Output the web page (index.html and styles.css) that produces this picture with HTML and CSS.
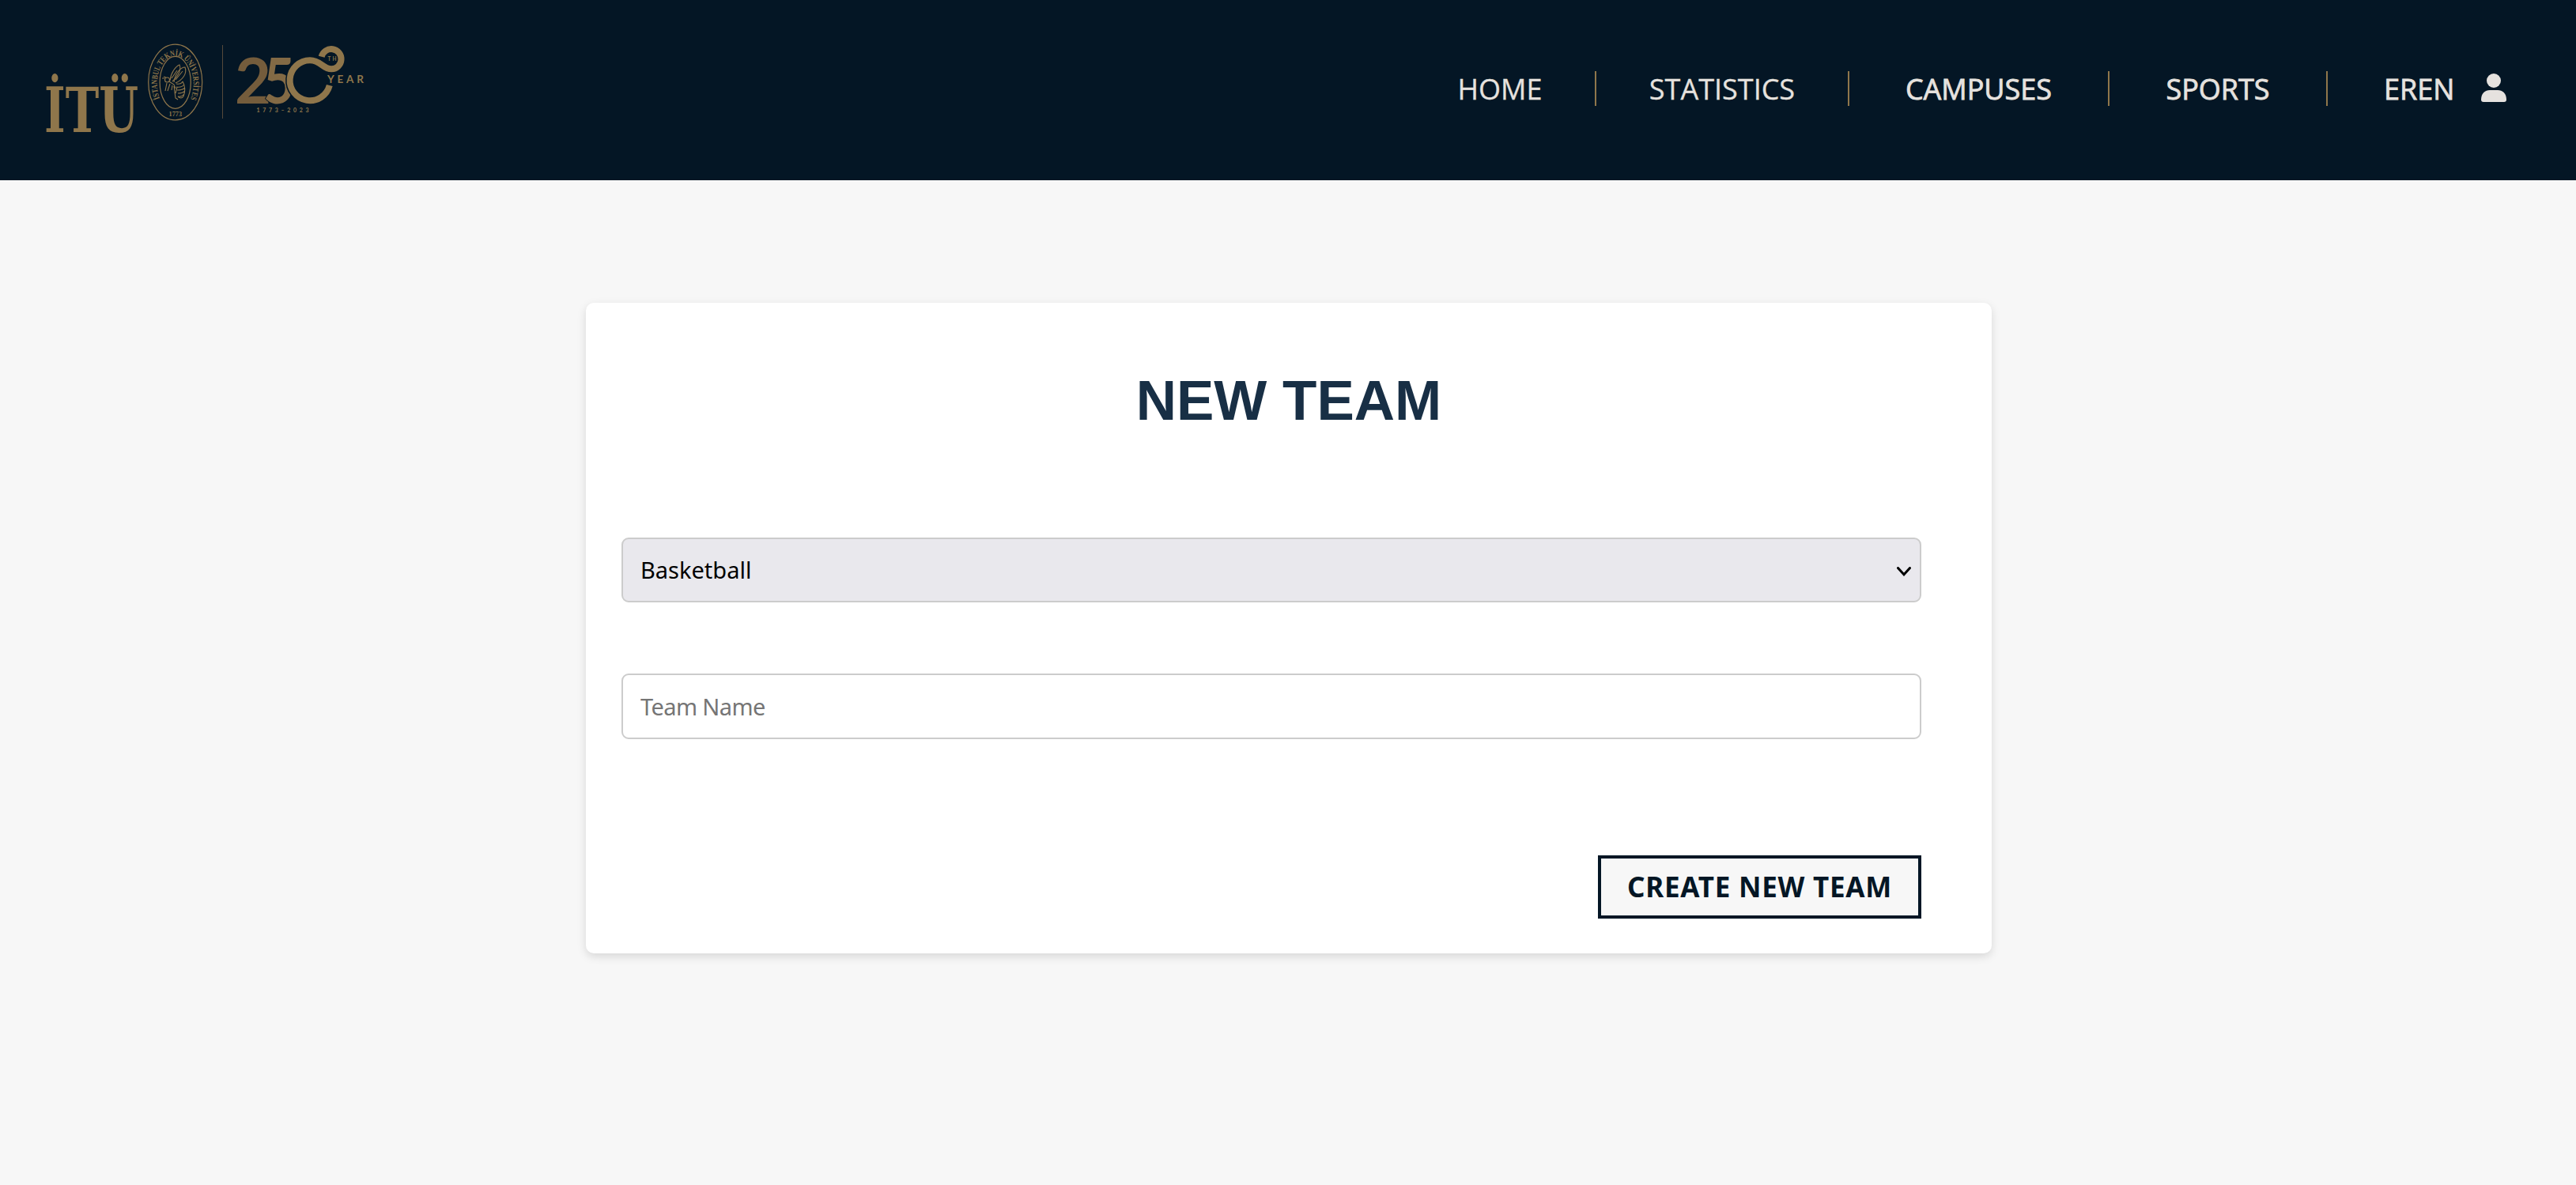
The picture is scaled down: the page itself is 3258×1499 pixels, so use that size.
FILE: index.html
```html
<!DOCTYPE html>
<html lang="en">
<head>
<meta charset="utf-8">
<title>New Team</title>
<link rel="stylesheet" href="styles.css">
</head>
<body>
<header class="header">
  <a class="brand" href="#" aria-label="İTÜ">
    <svg class="logo" viewBox="50 40 430 155" role="img">
      <text class="wordmark" x="56" y="167" textLength="119" lengthAdjust="spacingAndGlyphs">İTÜ</text>
      <g class="line">
        <ellipse cx="221.7" cy="104" rx="34" ry="47.8"/>
        <ellipse cx="221.7" cy="104.3" rx="19.6" ry="33"/>
        <g class="bee">
          <path d="M215 102C216 92 222 84 227 82C230 89 224 98 218 103"/>
          <path d="M220 104C221 94 228 85 234 85C237 93 231 101 222 105"/>
          <path d="M222 101L231 90M217 99L224 89"/>
          <circle cx="211.5" cy="101" r="3"/>
          <path d="M208 99L205 99M210 98L207 97M214 103L220 107L222 112M211 105L209 115M215 106L212 115M218 108L217 114M220 109L222 124L225 126M224 110L222 118"/>
          <path d="M223 106Q229 107 231 103M223 110Q230 111 233 107M224 114Q231 114 234 111M225 118Q231 118 234 115M225 122Q230 123 233 119M231 103Q236 112 232 122Q229 126 225 122"/>
        </g>
      </g>
      <path id="sealArc" class="guide" d="M202 124.500A23 35.500 0 1 1 241.400 124.500"/>
      <text class="seal-text"><textPath href="#sealArc" textLength="134" lengthAdjust="spacingAndGlyphs">İSTANBUL TEKNİK ÜNİVERSİTESİ</textPath></text>
      <text class="seal-year" x="213.500" y="147" textLength="16.500" lengthAdjust="spacingAndGlyphs">1773</text>
      <rect class="rule" x="281" y="57" width="1" height="93"/>
      <text class="digit two" x="297" y="130.500" textLength="46" lengthAdjust="spacingAndGlyphs">2</text>
      <text class="digit five" x="333" y="130.500" textLength="40" lengthAdjust="spacingAndGlyphs">5</text>
      <path class="ring-gap" d="M392 76.200A25.500 25.500 0 1 0 416.800 108"/>
      <path class="ring" d="M406.700 71.700A12.600 12.600 0 1 1 419.300 87.300C408 87.300 406 76.200 392 76.200A25.500 25.500 0 1 0 416.800 108"/>
      <text class="small th" x="414.500" y="77" textLength="11" lengthAdjust="spacing">TH</text>
      <text class="small year" x="414" y="105" textLength="46" lengthAdjust="spacing">YEAR</text>
      <text class="small span" x="324.500" y="142" textLength="66" lengthAdjust="spacing">1773–2023</text>
    </svg>
  </a>
  <nav class="nav">
    <a class="nav-item home" href="#">HOME</a>
    <a class="nav-item statistics" href="#">STATISTICS</a>
    <a class="nav-item campuses" href="#">CAMPUSES</a>
    <a class="nav-item sports" href="#">SPORTS</a>
    <a class="nav-item user" href="#">EREN
      <svg class="user-icon" viewBox="0 0 32 36"><ellipse cx="16" cy="9" rx="9" ry="9"/><path d="M0 33C0 25 5 21 11 21H21C27 21 32 25 32 33Q32 36 29 36H3Q0 36 0 33Z"/></svg>
    </a>
  </nav>
</header>
<main class="card">
  <h1 class="title">NEW TEAM</h1>
  <form class="form">
    <div class="field select" role="combobox" tabindex="0">
      <span class="select-text">Basketball</span>
      <svg class="chevron" viewBox="0 0 18 12"><path d="M1.500 1.500L9 9.800L16.500 1.500"/></svg>
    </div>
    <input class="field" type="text" placeholder="Team Name">
    <button class="submit" type="button">CREATE NEW TEAM</button>
  </form>
</main>
</body>
</html>
```
FILE: styles.css
```css
* { box-sizing: border-box; }
body {
  margin: 0;
  min-height: 1499px;
  background: #f7f7f7;
  font-family: "Noto Sans", sans-serif;
}
.header {
  display: flex;
  justify-content: space-between;
  height: 228px;
  padding: 40px 88px 0 50px;
  background: #041625;
}
.brand { display: block; }
.logo { display: block; width: 430px; height: 155px; }
.wordmark { fill: #8f764b; font: bold 79px "DejaVu Serif", serif; }
.line { fill: none; stroke: #8f764b; stroke-width: 1.2; }
.bee { stroke-width: 1.1; }
.guide { fill: none; }
.seal-text { fill: #8f764b; font: bold 10.5px "Liberation Serif", serif; }
.seal-year { fill: #8f764b; font: bold 9px "Liberation Serif", serif; }
.rule { fill: #55493a; }
.digit { font: bold 80px Lato, sans-serif; stroke: #041625; stroke-width: 2px; paint-order: stroke; }
.two { fill: #745c3c; }
.five { fill: #836a45; }
.ring { fill: none; stroke: #8f764b; stroke-width: 8; }
.ring-gap { fill: none; stroke: #041625; stroke-width: 11; }
.small { fill: #8f764b; font-family: Lato, sans-serif; font-weight: bold; }
.th { font-size: 6.5px; }
.year { font-size: 13.5px; }
.span { font-size: 7px; }

.nav { display: flex; height: 44px; margin-top: 50px; }
.nav-item {
  display: flex;
  align-items: center;
  justify-content: center;
  padding-top: 1px;
  color: #e6e2df;
  font: 36px/44px "Open Sans", sans-serif;
  -webkit-text-stroke: .3px #e6e2df;
  text-decoration: none;
  white-space: nowrap;
}
.nav-item + .nav-item { border-left: 2px solid #8f764b; }
.home { width: 240px; }
.statistics { width: 320px; }
.campuses { width: 329px; -webkit-text-stroke: .8px #e6e2df; }
.sports { width: 276px; -webkit-text-stroke: .8px #e6e2df; }
.user { width: 228px; padding-left: 71px; justify-content: space-between; -webkit-text-stroke: .8px #e6e2df; }
.user-icon { width: 32px; height: 36px; margin-top: -3px; fill: #e6e2df; }

.card {
  width: 1778px;
  height: 823px;
  margin: 155px 0 0 741px;
  padding: 80px 89px 44px 45px;
  border-radius: 10px;
  background: #fff;
  box-shadow: 0 4px 12px rgba(0, 0, 0, .13);
}
.title {
  margin: 0 -44px 0 0;
  color: #182f45;
  font: bold 71px/88px "Liberation Sans", sans-serif;
  text-align: center;
}
.form { display: flex; flex-direction: column; margin-top: 129px; }
.field {
  width: 100%;
  height: 83px;
  padding: 0 22px;
  border: 2px solid #ccc;
  border-radius: 9px;
  background: #fff;
  font: 29px/38px "Noto Sans", sans-serif;
}
.field::placeholder { color: #757575; opacity: 1; letter-spacing: -.6px; }
.select {
  display: flex;
  align-items: center;
  justify-content: space-between;
  height: 82px;
  margin-bottom: 90px;
  padding-right: 11px;
  background: #e9e8ed;
  color: #000;
}
.chevron { width: 18px; height: 12px; margin-top: 3px; fill: none; stroke: #000; stroke-width: 3; stroke-linecap: round; }
.submit {
  align-self: flex-end;
  width: 409px;
  height: 80px;
  margin-top: 147px;
  padding: 0;
  border: 4px solid #041625;
  background: #f7f7f7;
  color: #041625;
  font: bold 35px/44px "Noto Sans", sans-serif;
  letter-spacing: .75px;
  white-space: nowrap;
}
```
